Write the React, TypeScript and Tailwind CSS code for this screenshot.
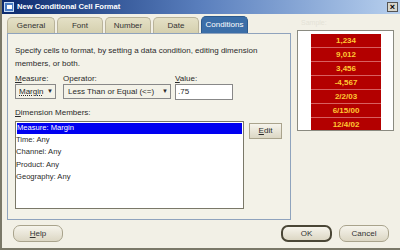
import React from "react";

const U = ({ c }: { c: string }) => <span className="underline">{c}</span>;

function Tab({ label, active, w }: { label: string; active?: boolean; w: string }) {
  return (
    <div
      className={
        "flex items-center justify-center rounded-t-[5px] border border-b-0 " +
        w +
        (active
          ? " h-[17px] bg-[#3b6ea8] border-[#2c5a8e] text-white"
          : " h-[16px] bg-gradient-to-b from-[#e4e0c6] to-[#d5d0ae] border-[#b9b39a] text-[#333]")
      }
    >
      {label}
    </div>
  );
}

function Btn({ children, w, def }: { children: React.ReactNode; w: string; def?: boolean }) {
  return (
    <div
      className={
        "h-[17px] flex items-center justify-center rounded-[7px] bg-gradient-to-b from-[#f6f4ec] to-[#dcd7c4] text-[#333] " +
        w +
        (def ? " border-2 border-[#4a4636]" : " border border-[#a9a38c]")
      }
    >
      {children}
    </div>
  );
}

export default function App() {
  const rows = ["1,234", "9,012", "3,456", "-4,567", "2/2/03", "6/15/00", "12/4/02"];
  return (
    <div
      className="w-[400px] h-[250px] bg-[#f2f0e6] flex flex-col text-[8px] text-[#2a2a2a] overflow-hidden border-l-2 border-b-2 border-[#7a7868] whitespace-nowrap"
      style={{ fontFamily: '"Liberation Sans", Arial, sans-serif' }}
    >
      {/* title bar */}
      <div className="h-[14px] flex items-center bg-gradient-to-r from-[#0c2a6e] via-[#5a7fbd] to-[#b8d0ee] shrink-0">
        <div className="w-[10px] h-[10px] ml-[2px] mr-[3px] bg-[#4a7cc4] border border-[#c8dcf4] flex items-center justify-center">
          <div className="w-[5px] h-[4px] bg-white" />
        </div>
        <span className="text-white font-bold text-[7.6px] leading-none">New Conditional Cell Format</span>
        <div className="ml-auto mr-[2px] w-[11px] h-[10px] bg-[#d8d6cc] border border-[#555] flex items-center justify-center text-[9px] font-bold leading-none text-black">
          ×
        </div>
      </div>

      <div className="flex pl-[5px] pt-[3px]">
        {/* left column */}
        <div className="w-[284px] flex flex-col">
          <div className="flex items-end gap-[2px] h-[16px]">
            <Tab label="General" w="w-[48px]" />
            <Tab label="Font" w="w-[46px]" />
            <Tab label="Number" w="w-[46px]" />
            <Tab label="Date" w="w-[46px]" />
            <Tab label="Conditions" w="w-[47px]" active />
          </div>
          <div className="h-[187px] border border-[#8fa3bd] bg-[#f3f2e8] px-[7px] pt-[10px] flex flex-col">
            <div className="leading-[13px]">
              Specify cells to format, by setting a data condition, editing dimension
              <br />
              members, or both.
            </div>
            <div className="flex mt-[3px] gap-[7px]">
              <div className="flex flex-col">
                <div className="leading-[11px]">
                  <U c="M" />easure:
                </div>
                <div className="w-[41px] h-[15px] border border-[#888] bg-[#f3f2e8] flex items-center pl-[3px] pr-[2px]">
                  <span className="underline decoration-dotted">Margin</span>
                  <span className="ml-auto text-[6px]">▼</span>
                </div>
              </div>
              <div className="flex flex-col">
                <div className="leading-[11px]">Operator:</div>
                <div className="w-[108px] h-[15px] border border-[#888] bg-[#f3f2e8] flex items-center pl-[4px] pr-[2px]">
                  <span>Less Than or Equal (&lt;=)</span>
                  <span className="ml-auto text-[6px]">▼</span>
                </div>
              </div>
              <div className="flex flex-col -ml-[3px]">
                <div className="leading-[11px]">
                  <U c="V" />alue:
                </div>
                <div className="w-[58px] h-[16px] border border-[#888] bg-white flex items-center pl-[2px]">
                  .75
                </div>
              </div>
            </div>
            <div className="mt-[7px] leading-[12px]">
              <U c="D" />imension Members:
            </div>
            <div className="flex gap-[5px] mt-[2px]">
              <div className="w-[229px] h-[88px] border border-[#7a7868] bg-white pt-[1px] leading-[12.4px] text-[7.6px]">
                <div className="bg-[#0000f0] text-white mx-[1px] h-[11px] flex items-center">Measure: Margin</div>
                <div>Time: Any</div>
                <div>Channel: Any</div>
                <div>Product: Any</div>
                <div>Geography: Any</div>
              </div>
              <div className="mt-[2px] w-[33px] h-[16px] border border-[#a9a38c] bg-gradient-to-b from-[#f6f4ec] to-[#dcd7c4] flex items-center justify-center">
                <span>
                  <U c="E" />dit
                </span>
              </div>
            </div>
          </div>
        </div>

        {/* preview */}
        <div className="ml-[6px] flex flex-col">
          <div className="h-[9px] text-[7px] leading-[9px] text-[#e4e2d6] pl-[4px] mt-[1px]">Sample:</div>
          <div className="mt-[3px] w-[97px] h-[101px] border border-[#8a8a80] bg-white pl-[13px] pt-[3px] overflow-hidden">
            <div className="w-[70px] bg-[#b30000]">
              {rows.map((r) => (
                <div
                  key={r}
                  className="h-[14px] flex items-center justify-center text-[#ffc933] font-bold text-[8px] border-b border-[#d86060]"
                >
                  {r}
                </div>
              ))}
            </div>
          </div>
        </div>
      </div>

      {/* buttons */}
      <div className="flex items-center mt-[5px] pl-[11px] pr-[11px]">
        <Btn w="w-[50px]">
          <span>
            <U c="H" />elp
          </span>
        </Btn>
        <div className="ml-auto flex gap-[7px]">
          <Btn w="w-[51px]" def>
            OK
          </Btn>
          <Btn w="w-[50px]">Cancel</Btn>
        </div>
      </div>
    </div>
  );
}
